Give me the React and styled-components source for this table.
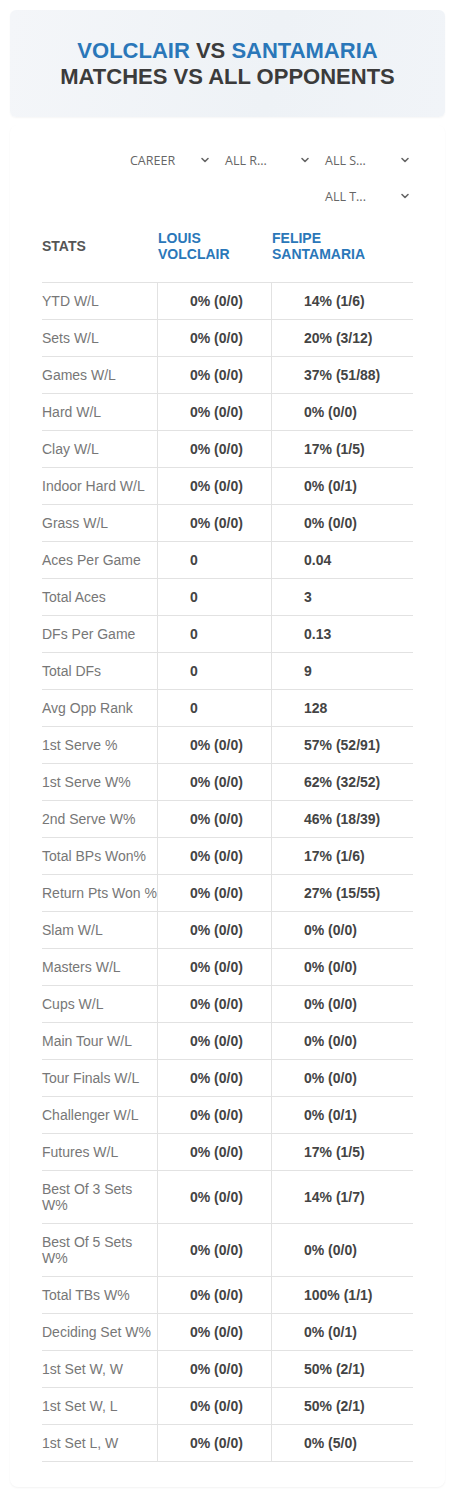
import React from "react";
import styled, { createGlobalStyle } from "styled-components";
import { ChevronDown } from "lucide-react";

const Global = createGlobalStyle`
  body { margin: 0; background: #ffffff; font-family: "Liberation Sans", Arial, sans-serif; }
  * { box-sizing: border-box; }
`;

const Page = styled.div`
  padding: 10px;
  display: flex;
  flex-direction: column;
  gap: 8px;
`;

const HeaderCard = styled.div`
  height: 107px;
  border-radius: 6px;
  background: linear-gradient(100deg, #f4f6f9 0%, #eef2f6 60%, #f1f4f8 100%);
  box-shadow: 0 1px 2px rgba(0, 0, 0, 0.04);
  display: flex;
  flex-direction: column;
  align-items: center;
  justify-content: center;
  padding-top: 1px;
`;

const TitleLine = styled.div`
  font-size: 22px;
  line-height: 26px;
  font-weight: 700;
  color: #3b3b3b;
  text-transform: uppercase;
  white-space: nowrap;
`;

const Blue = styled.span`
  color: #2a77b9;
`;

const Card = styled.div`
  background: #fff;
  border-radius: 8px;
  box-shadow: 0 1px 2px rgba(0, 0, 0, 0.05);
  padding: 17px 32px 25px;
`;

const Filters = styled.div`
  display: flex;
  flex-wrap: wrap;
  justify-content: flex-end;
  margin-right: -2px;
`;

const Select = styled.div`
  width: ${(p) => p.$w}px;
  height: 36px;
  display: flex;
  align-items: center;
  justify-content: space-between;
  padding: 0 4px 0 10px;
  font-family: "Open Sans", "Noto Sans", sans-serif;
  font-size: 12.5px;
  color: #666;
  text-transform: uppercase;
  svg { color: #666; }
`;

const Table = styled.div`
  display: grid;
  grid-template-columns: 115px 114px 1fr;
`;

const HeadCell = styled.div`
  padding: 16px 0 20px ${(p) => (p.$first ? 0 : 1)}px;
  border-bottom: 1px solid #e2e2e2;
  font-size: 14px;
  line-height: 16px;
  font-weight: 700;
  text-transform: uppercase;
  color: ${(p) => (p.$first ? "#555" : "#2a77b9")};
  white-space: pre;
  display: flex;
  align-items: center;
`;

const Cell = styled.div`
  padding: 10px 0 10px ${(p) => (p.$label ? 0 : 32)}px;
  border-bottom: 1px solid #e2e2e2;
  border-left: ${(p) => (p.$label ? "none" : "1px solid #e2e2e2")};
  font-size: 14px;
  line-height: 16px;
  font-weight: ${(p) => (p.$label ? 400 : 700)};
  color: ${(p) => (p.$label ? "#777" : "#444")};
  white-space: pre;
  display: flex;
  align-items: center;
`;

const rows = [
  ["YTD W/L", "0% (0/0)", "14% (1/6)"],
  ["Sets W/L", "0% (0/0)", "20% (3/12)"],
  ["Games W/L", "0% (0/0)", "37% (51/88)"],
  ["Hard W/L", "0% (0/0)", "0% (0/0)"],
  ["Clay W/L", "0% (0/0)", "17% (1/5)"],
  ["Indoor Hard W/L", "0% (0/0)", "0% (0/1)"],
  ["Grass W/L", "0% (0/0)", "0% (0/0)"],
  ["Aces Per Game", "0", "0.04"],
  ["Total Aces", "0", "3"],
  ["DFs Per Game", "0", "0.13"],
  ["Total DFs", "0", "9"],
  ["Avg Opp Rank", "0", "128"],
  ["1st Serve %", "0% (0/0)", "57% (52/91)"],
  ["1st Serve W%", "0% (0/0)", "62% (32/52)"],
  ["2nd Serve W%", "0% (0/0)", "46% (18/39)"],
  ["Total BPs Won%", "0% (0/0)", "17% (1/6)"],
  ["Return Pts Won %", "0% (0/0)", "27% (15/55)"],
  ["Slam W/L", "0% (0/0)", "0% (0/0)"],
  ["Masters W/L", "0% (0/0)", "0% (0/0)"],
  ["Cups W/L", "0% (0/0)", "0% (0/0)"],
  ["Main Tour W/L", "0% (0/0)", "0% (0/0)"],
  ["Tour Finals W/L", "0% (0/0)", "0% (0/0)"],
  ["Challenger W/L", "0% (0/0)", "0% (0/1)"],
  ["Futures W/L", "0% (0/0)", "17% (1/5)"],
  ["Best Of 3 Sets\nW%", "0% (0/0)", "14% (1/7)"],
  ["Best Of 5 Sets\nW%", "0% (0/0)", "0% (0/0)"],
  ["Total TBs W%", "0% (0/0)", "100% (1/1)"],
  ["Deciding Set W%", "0% (0/0)", "0% (0/1)"],
  ["1st Set W, W", "0% (0/0)", "50% (2/1)"],
  ["1st Set W, L", "0% (0/0)", "50% (2/1)"],
  ["1st Set L, W", "0% (0/0)", "0% (5/0)"],
];

const filters = [
  ["Career", 95],
  ["All R...", 100],
  ["All S...", 100],
  ["All T...", 100],
];

export default function App() {
  return (
    <>
      <Global />
      <Page>
        <HeaderCard>
          <TitleLine>
            <Blue>Volclair</Blue> vs <Blue>Santamaria</Blue>
          </TitleLine>
          <TitleLine>Matches vs all opponents</TitleLine>
        </HeaderCard>
        <Card>
          <Filters>
            {filters.map(([t, w]) => (
              <Select key={t} $w={w}>
                <span>{t}</span>
                <ChevronDown size={12} strokeWidth={3.2} />
              </Select>
            ))}
          </Filters>
          <Table>
            <HeadCell $first>Stats</HeadCell>
            <HeadCell>{"Louis\nVolclair"}</HeadCell>
            <HeadCell>{"Felipe\nSantamaria"}</HeadCell>
            {rows.map(([l, a, b]) => (
              <React.Fragment key={l}>
                <Cell $label>{l}</Cell>
                <Cell>{a}</Cell>
                <Cell>{b}</Cell>
              </React.Fragment>
            ))}
          </Table>
        </Card>
      </Page>
    </>
  );
}
